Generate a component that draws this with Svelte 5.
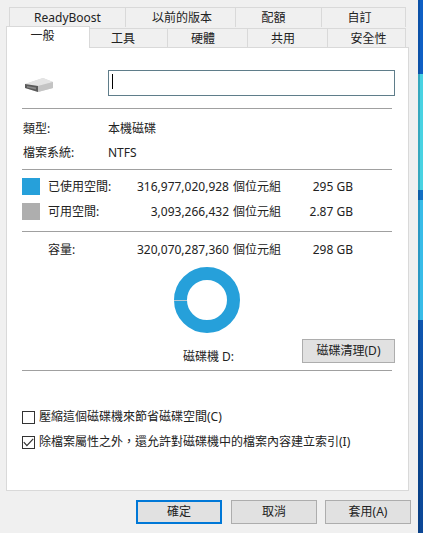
<script lang="ts">
  const usage = [
    { label: '已使用空間:', bytes: '316,977,020,928', size: '295 GB', color: '#26a0da' },
    { label: '可用空間:', bytes: '3,093,266,432', size: '2.87 GB', color: '#aeaeae' }
  ];
  // pad nudges the label, the real dialog doesn't centre them exactly
  const backTabs = [
    { name: 'ReadyBoost', w: 117, pad: '0' },
    { name: '以前的版本', w: 110, pad: '0 0 0 3px' },
    { name: '配額', w: 86, pad: '0 10px 0 0' },
    { name: '自訂', w: 84, pad: '0 8px 0 0' }
  ];
  const frontTabs = [
    { name: '工具', w: 78, pad: '1px 11px 0 0' },
    { name: '硬體', w: 80, pad: '1px 9px 0 0' },
    { name: '共用', w: 80, pad: '1px 9px 0 0' },
    { name: '安全性', w: 78, pad: '1px 0 0 4px' }
  ];
</script>

<div class="dialog">
  <div class="tabs">
    <div class="tab-row back">
      {#each backTabs as t}
        <div class="tab" style="width: {t.w}px; padding: {t.pad}">{t.name}</div>
      {/each}
    </div>
    <div class="tab-row front">
      <div class="tab active">一般</div>
      {#each frontTabs as t}
        <div class="tab" style="width: {t.w}px; padding: {t.pad}">{t.name}</div>
      {/each}
    </div>
  </div>

  <div class="panel">
    <div class="name-row">
      <svg class="drive" width="30" height="16" viewBox="0 0 30 16">
        <path d="M1 7 L19 1 L29 5 L29 11 L14 15 L1 11 Z" fill="#d8d8d8" />
        <path d="M1 7 L19 1 L29 5 L14 9 Z" fill="#e4e4e4" />
        <path d="M14 9 L29 5 L29 11 L14 15 Z" fill="#c4c4c4" />
        <path d="M1 7 L14 9 L14 15 L1 11 Z" fill="#5a5a5a" />
        <path d="M3 9 L12 10.5 L12 12.5 L3 10.5 Z" fill="#8a8a8a" />
      </svg>
      <div class="name-input"><span class="caret"></span></div>
    </div>

    <hr />

    <div class="info-row"><span class="info-label">類型:</span><span>本機磁碟</span></div>
    <div class="info-row fs"><span class="info-label">檔案系統:</span><span>NTFS</span></div>

    <hr class="hr-usage" />

    {#each usage as u}
      <div class="usage-row">
        <span class="swatch" style="background: {u.color}"></span>
        <span class="u-label">{u.label}</span>
        <span class="u-bytes">{u.bytes}</span>
        <span class="u-unit">個位元組</span>
        <span class="u-size">{u.size}</span>
      </div>
    {/each}

    <hr class="hr-cap" />

    <div class="usage-row cap">
      <span class="swatch blank"></span>
      <span class="u-label">容量:</span>
      <span class="u-bytes">320,070,287,360</span>
      <span class="u-unit">個位元組</span>
      <span class="u-size">298 GB</span>
    </div>

    <div class="chart-row">
      <div class="chart-col">
        <svg width="66" height="66" viewBox="0 0 66 66">
          <circle cx="33" cy="33" r="26.5" fill="none" stroke="#26a0da" stroke-width="13" />
          <rect x="0" y="33" width="13" height="1" fill="#b4c8d4" />
        </svg>
        <div class="drive-name">磁碟機 D:</div>
      </div>
      <button class="btn cleanup">磁碟清理(D)</button>
    </div>

    <hr class="hr-bottom" />

    <label class="check first"><span class="box"></span>壓縮這個磁碟機來節省磁碟空間(C)</label>
    <label class="check">
      <span class="box">
        <svg width="11" height="9" viewBox="0 0 11 9"><path d="M0.8 4.2 L3.9 7.6 L10.2 0.8" fill="none" stroke="#333" stroke-width="1.2" /></svg>
      </span>
      除檔案屬性之外&#xFF0C;還允許對磁碟機中的檔案內容建立索引(I)
    </label>
  </div>

  <div class="footer">
    <button class="btn default">確定</button>
    <button class="btn">取消</button>
    <button class="btn apply">套用(A)</button>
  </div>

  <div class="edge"></div>
</div>

<style>
  :global(body) {
    margin: 0;
  }

  .dialog {
    position: relative;
    width: 423px;
    height: 533px;
    box-sizing: border-box;
    padding: 7px 0 0 6px;
    background: #f0f0f0;
    color: #222;
    font-family: "Noto Sans", "Noto Sans CJK TC", sans-serif;
    font-size: 12px;
    line-height: 18px;
    overflow: hidden;
  }

  /* desktop wallpaper showing past the window's right side */
  .edge {
    position: absolute;
    top: 0;
    right: 0;
    width: 5px;
    height: 100%;
    box-shadow: inset 2px 0 0 rgba(0, 40, 80, 0.25);
    background: linear-gradient(
      #0f5fc4 0,
      #0f5fc4 74px,
      #48d2e2 74px,
      #48d2e2 190px,
      #1170c4 190px,
      #1170c4 200px,
      #38bce8 200px,
      #38bce8 320px,
      #0f56b0 320px,
      #0c4796 533px
    );
  }

  .tabs {
    width: 403px;
  }

  .tab-row {
    display: flex;
  }

  .tab {
    box-sizing: border-box;
    display: flex;
    align-items: center;
    justify-content: center;
    background: #f0f0f0;
    border: 1px solid #d9d9d9;
    border-left-width: 0;
    white-space: nowrap;
  }

  .back {
    height: 20px;
    padding-left: 3px;
  }

  .back .tab {
    border-bottom: 0;
  }

  .back .tab:first-child {
    border-left-width: 1px;
  }

  .front {
    height: 21px;
    margin-bottom: -1px;
    position: relative;
    z-index: 1;
  }

  .front .tab {
    height: 20px;
    margin-top: 1px;
  }

  .front .active {
    width: 84px;
    height: 22px;
    margin-top: -1px;
    padding: 0 11px 4px 0;
    background: #fff;
    border: 1px solid #d9d9d9;
    border-bottom: 0;
  }

  .panel {
    box-sizing: border-box;
    width: 403px;
    height: 444px;
    padding: 22px 0 0 15px;
    background: #fff;
    border: 1px solid #d9d9d9;
  }

  .name-row {
    display: flex;
    align-items: center;
    height: 26px;
  }

  .drive {
    margin: 4px 0 0 2px;
    width: 30px;
  }

  .name-input {
    box-sizing: border-box;
    width: 287px;
    height: 26px;
    margin-left: 54px;
    padding: 3px;
    border: 1px solid #5f7d8a;
  }

  .caret {
    display: block;
    width: 1px;
    height: 15px;
    background: #000;
  }

  hr {
    width: 370px;
    height: 1px;
    margin: 12px 0 0;
    border: 0;
    background: #a0a0a0;
  }

  .info-row {
    display: flex;
    align-items: center;
    height: 18px;
    margin-top: 11px;
    padding-left: 1px;
  }

  .info-row.fs {
    margin-top: 6px;
  }

  .info-label {
    width: 85px;
  }

  .hr-usage {
    margin-top: 7px;
  }

  .hr-cap {
    margin-top: 11px;
  }

  .hr-bottom {
    margin-top: 4px;
  }

  .usage-row {
    display: flex;
    align-items: center;
    height: 17px;
    margin-top: 8px;
    white-space: nowrap;
  }

  .cap {
    margin-top: 9px;
  }

  .swatch {
    width: 18px;
    height: 17px;
    flex: none;
  }

  .blank {
    background: transparent;
  }

  .u-label {
    width: 72px;
    margin-left: 8px;
  }

  .u-bytes {
    width: 109px;
    text-align: right;
  }

  .u-unit {
    margin-left: 4px;
    width: 48px;
  }

  .u-size {
    width: 72px;
    text-align: right;
  }

  .chart-row {
    display: flex;
    justify-content: space-between;
    align-items: flex-end;
    width: 370px;
    margin-top: 9px;
  }

  .chart-col {
    display: flex;
    flex-direction: column;
    align-items: center;
    margin-left: 152px;
    width: 66px;
  }

  .drive-name {
    margin-top: 15px;
    white-space: nowrap;
    height: 18px;
    padding-left: 3px;
  }

  .btn {
    box-sizing: border-box;
    width: 86px;
    height: 24px;
    padding: 0;
    background: #e1e1e1;
    border: 1px solid #adadad;
    color: #222;
    font: inherit;
  }

  .cleanup {
    width: 93px;
    margin: 0 -3px 3px 0;
  }

  .check {
    display: flex;
    align-items: center;
    height: 18px;
    margin-top: 7px;
    white-space: nowrap;
  }

  .check.first {
    margin-top: 37px;
  }

  .box {
    box-sizing: border-box;
    display: flex;
    align-items: center;
    justify-content: center;
    width: 13px;
    height: 13px;
    margin-right: 4px;
    border: 1px solid #333;
    background: #fff;
  }

  .footer {
    display: flex;
    gap: 9px;
    justify-content: flex-end;
    width: 405px;
    margin-top: 9px;
  }

  .apply {
    margin-left: -1px;
  }

  .default {
    border: 2px solid #0078d7;
  }
</style>
